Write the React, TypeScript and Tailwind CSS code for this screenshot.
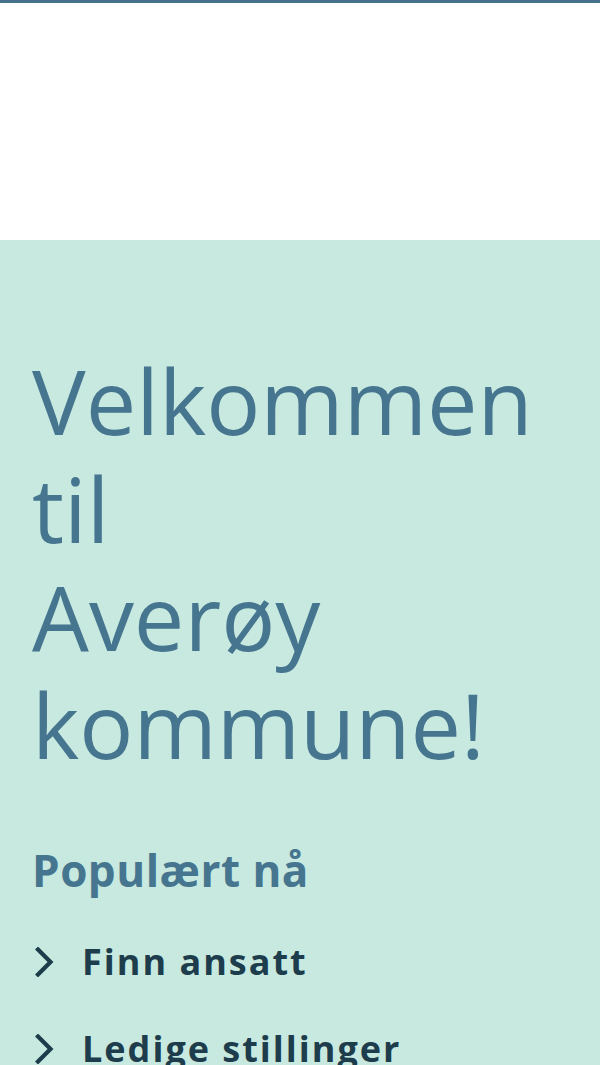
import React from "react";

const links = ["Finn ansatt", "Ledige stillinger"];
const headingWords = ["Velkommen", "til", "Averøy", "kommune!"];

const Chevron: React.FC = () => (
    <svg width="22" height="30" viewBox="0 0 22 30" fill="none" className="shrink-0">
        <path d="M6 2.5 L18.5 15 L6 27.5" stroke="currentColor" strokeWidth="4.2" strokeLinecap="square" />
    </svg>
);

const App: React.FC = () => {
    return (
        <div className="min-h-screen bg-[#c8e9df]" style={{ fontFamily: "'Open Sans', sans-serif" }}>
            <header className="h-[240px] bg-white border-t-[3px] border-[#46718d]" />

            <main className="px-8 pt-[106px] pb-10">
                <h1 className="text-[90px] leading-[108px] font-normal text-[#46758f]">
                    {headingWords.map((w) => (
                        <span key={w} className="block">
                            {w}
                        </span>
                    ))}
                </h1>

                <h2 className="mt-[65px] text-[44px] leading-[54px] font-bold tracking-[0.5px] text-[#46758f]">
                    Populært nå
                </h2>

                <ul className="mt-[41px] flex flex-col gap-[39px]">
                    {links.map((l) => (
                        <li key={l} className="flex items-center gap-[28px] text-[#1d3c4c]">
                            <Chevron />
                            <span className="text-[36px] leading-[48px] font-bold tracking-[2px]">{l}</span>
                        </li>
                    ))}
                </ul>
            </main>
        </div>
    );
};

export default App;
